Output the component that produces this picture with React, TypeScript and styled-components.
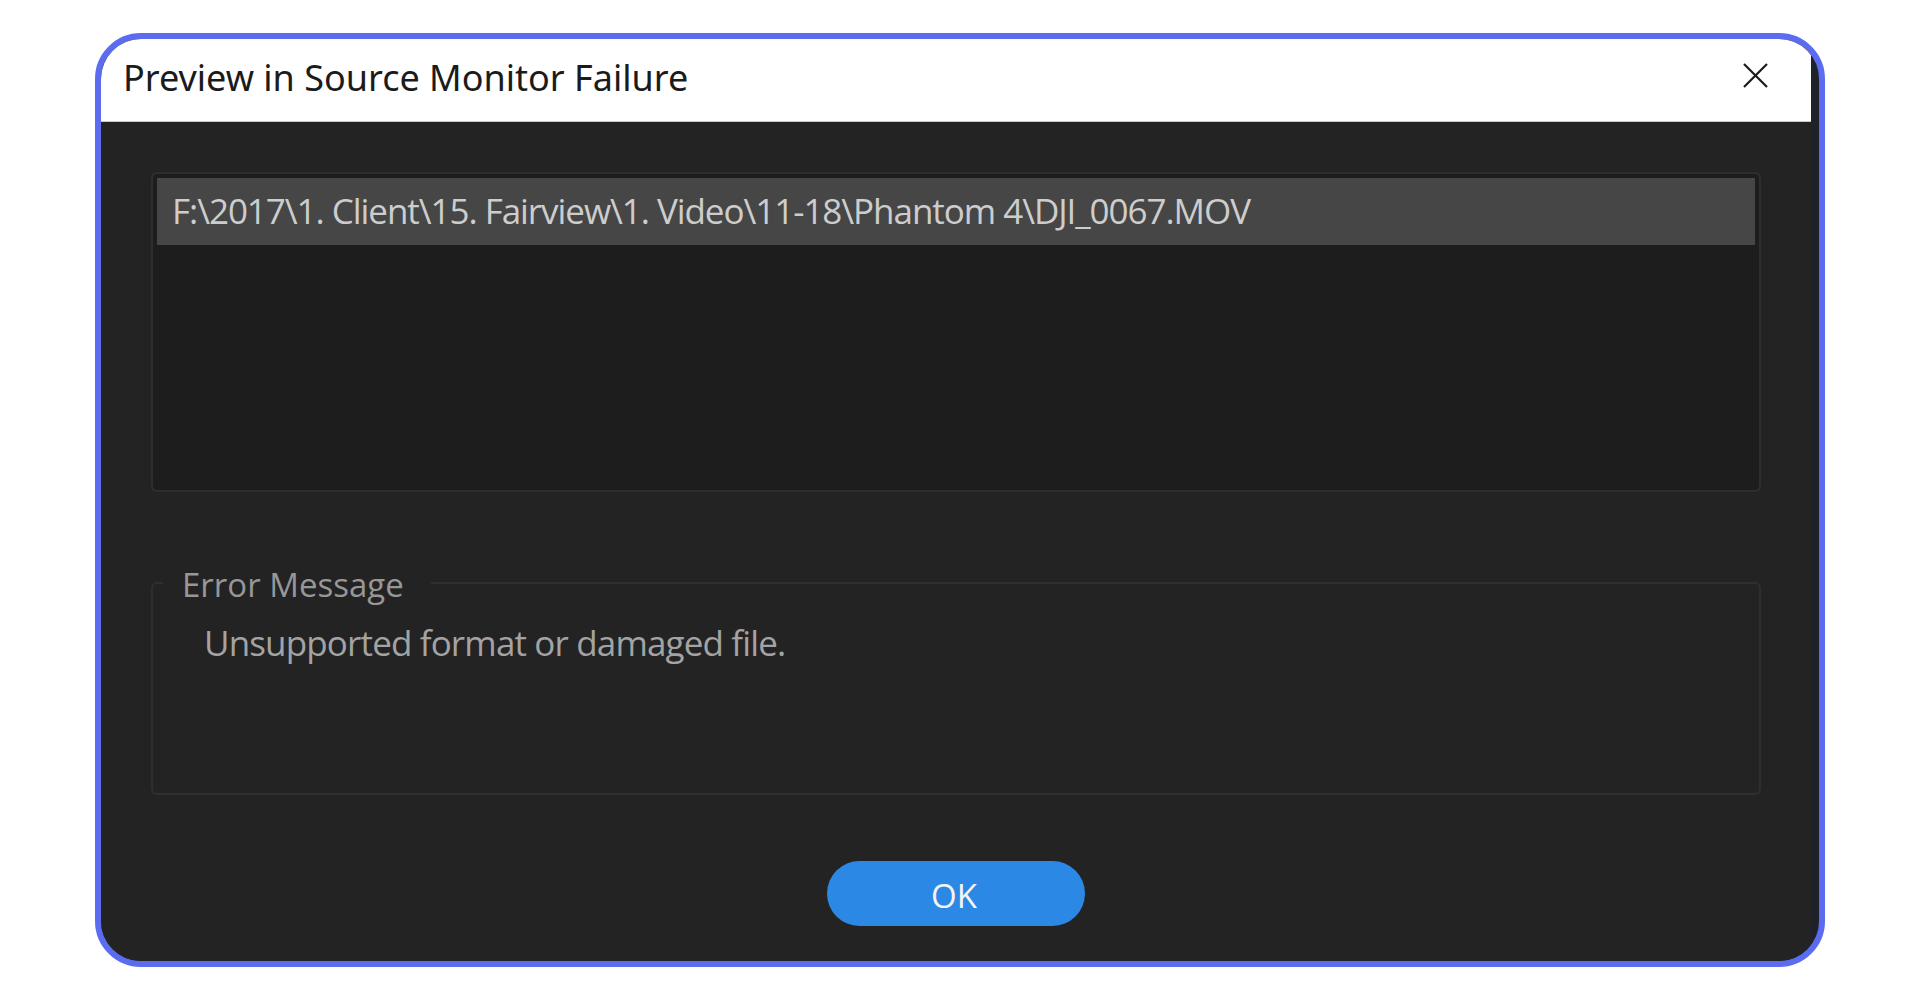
import React from 'react';
import styled, { createGlobalStyle } from 'styled-components';

const GlobalStyle = createGlobalStyle`
  html, body {
    margin: 0;
    padding: 0;
    background: #ffffff;
  }
  * {
    box-sizing: border-box;
  }
`;

const Page = styled.div`
  width: 1920px;
  height: 998px;
  padding: 33px 0 0 95px;
  background: #ffffff;
`;

const Frame = styled.div`
  width: 1730px;
  height: 934px;
  border: 6px solid #5b6cf0;
  border-radius: 46px;
  background: #1f2329;
  overflow: hidden;
  display: flex;
`;

const Window = styled.div`
  width: 1710px;
  display: flex;
  flex-direction: column;
  background: #232323;
`;

const TitleBar = styled.div`
  height: 83px;
  background: #ffffff;
  border-bottom: 1px solid #c9c9c9;
  display: flex;
  align-items: center;
  justify-content: space-between;
  padding: 0 43px 6px 22px;
  font-family: 'Noto Sans', 'Open Sans', sans-serif;
  font-size: 36px;
  color: #1b1b1b;
`;

const CloseButton = styled.button`
  width: 25px;
  height: 25px;
  padding: 0;
  border: none;
  background: none;
  display: flex;
  margin-top: -3px;
`;

const Body = styled.div`
  flex: 1;
  display: flex;
  flex-direction: column;
  padding: 50px 50px 35px;
  font-family: 'Open Sans', 'Noto Sans', sans-serif;
`;

const FileList = styled.div`
  height: 320px;
  background: #1d1d1d;
  border: 2px solid #2e2e2e;
  border-radius: 6px;
  padding: 4px;
`;

const FileRow = styled.div<{ $selected?: boolean }>`
  height: 67px;
  display: flex;
  align-items: center;
  padding: 0 0 2px 15px;
  background: ${(p) => (p.$selected ? '#464646' : 'transparent')};
  color: #cdcdcd;
  font-size: 35px;
  letter-spacing: -1.05px;
  white-space: nowrap;
`;

const Group = styled.fieldset`
  margin: 69px 0 0;
  height: 234px;
  padding: 0;
  border: 2px solid #2f2f2f;
  border-radius: 6px;
`;

const Legend = styled.legend`
  margin-left: 10px;
  padding: 4px 27px 0 19px;
  color: #979797;
  font-size: 33px;
  line-height: 40px;
`;

const Message = styled.div`
  margin: 14px 0 0 51px;
  color: #a3a3a3;
  font-size: 35px;
  letter-spacing: -0.85px;
`;

const Footer = styled.div`
  margin-top: 66px;
  display: flex;
  justify-content: center;
`;

const OkButton = styled.button`
  width: 258px;
  height: 65px;
  border: none;
  border-radius: 33px;
  background: #2b88e5;
  color: #f4f4f4;
  font-family: 'Open Sans', 'Noto Sans', sans-serif;
  font-size: 33px;
  padding: 3px 4px 0 0;
`;

const App: React.FC = () => {
  return (
    <>
      <GlobalStyle />
      <Page>
        <Frame>
          <Window>
            <TitleBar>
              <span>Preview in Source Monitor Failure</span>
              <CloseButton aria-label="Close">
                <svg width="25" height="25" viewBox="0 0 25 25">
                  <path d="M1 1 L24 24 M24 1 L1 24" stroke="#1b1b1b" strokeWidth="2.2" fill="none" />
                </svg>
              </CloseButton>
            </TitleBar>
            <Body>
              <FileList>
                <FileRow $selected>F:\2017\1. Client\15. Fairview\1. Video\11-18\Phantom 4\DJI_0067.MOV</FileRow>
              </FileList>
              <Group>
                <Legend>Error Message</Legend>
                <Message>Unsupported format or damaged file.</Message>
              </Group>
              <Footer>
                <OkButton>OK</OkButton>
              </Footer>
            </Body>
          </Window>
        </Frame>
      </Page>
    </>
  );
};

export default App;
